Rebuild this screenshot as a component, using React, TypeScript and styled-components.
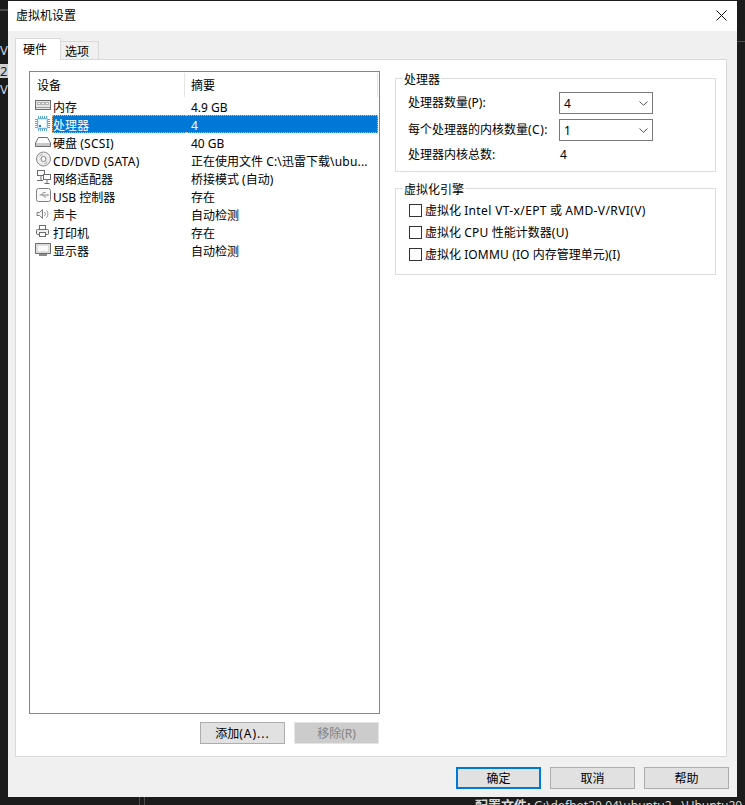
import React from "react";
import styled, { createGlobalStyle } from "styled-components";

const Global = createGlobalStyle`
  html, body { margin: 0; padding: 0; background: #1b1b1b; }
  * { box-sizing: border-box; }
`;

const FONT = `"Noto Sans", "Noto Sans CJK SC", "Liberation Sans", sans-serif`;

const Desktop = styled.div`
  position: relative;
  width: 745px;
  height: 805px;
  overflow: hidden;
  background: #1b1b1b;
  padding: 1px 8px 0 8px;
  font-family: ${FONT};
  font-size: 12px;
  color: #000;
`;

const BackText = styled.div<{ $x: number; $y: number; $invert?: boolean }>`
  position: absolute;
  left: ${(p) => p.$x}px;
  top: ${(p) => p.$y}px;
  width: ${(p) => (p.$invert ? "8px" : "auto")};
  height: ${(p) => (p.$invert ? "14px" : "auto")};
  color: ${(p) => (p.$invert ? "#222" : "#c8d4e0")};
  background: ${(p) => (p.$invert ? "#d0d0d0" : "transparent")};
  font-size: 13px;
  line-height: 14px;
  white-space: nowrap;
`;

const StatusText = styled.div`
  position: absolute;
  left: 475px;
  top: 797px;
  color: #d8d8d8;
  font-size: 13px;
  font-weight: 700;
  line-height: 16px;
  white-space: nowrap;
`;

const StatusPath = styled.span`
  font-size: 12px;
  font-weight: 400;
`;

const BackRule = styled.div<{ $x: number; $y: number; $w: number; $h: number }>`
  position: absolute;
  left: ${(p) => p.$x}px;
  top: ${(p) => p.$y}px;
  width: ${(p) => p.$w}px;
  height: ${(p) => p.$h}px;
  background: #4a4a4a;
`;

const Win = styled.div`
  position: relative;
  width: 729px;
  height: 796px;
  background: #f0f0f0;
  display: flex;
  flex-direction: column;
`;

const TitleBar = styled.div`
  height: 30px;
  background: #fff;
  display: flex;
  align-items: center;
  justify-content: space-between;
  padding: 0 10px 2px 8px;
  font-size: 12px;
`;

const Body = styled.div`
  flex: 1;
  display: flex;
  flex-direction: column;
  padding: 7px 10px 0 7px;
`;

const TabStrip = styled.div`
  display: flex;
  align-items: flex-end;
  height: 21px;
`;

const ActiveTab = styled.div`
  width: 46px;
  height: 22px;
  margin-bottom: -1px;
  padding: 0 0 2px 7px;
  background: #fff;
  border: 1px solid #d9d9d9;
  border-bottom: none;
  display: flex;
  align-items: center;
  position: relative;
  z-index: 1;
`;

const IdleTab = styled.div`
  width: 38px;
  height: 18px;
  padding: 1px 0 0 4px;
  background: #f0f0f0;
  border: 1px solid #d9d9d9;
  border-left: none;
  border-bottom: none;
  display: flex;
  align-items: center;
`;

const Panel = styled.div`
  width: 712px;
  height: 698px;
  background: #fff;
  border: 1px solid #d9d9d9;
  display: flex;
  padding: 11px 10px 0 13px;
  gap: 15px;
`;

const LeftCol = styled.div`
  width: 351px;
  display: flex;
  flex-direction: column;
`;

const ListBox = styled.div`
  height: 643px;
  border: 1px solid #82878f;
  padding: 1px 0 0 1px;
`;

const HeadRow = styled.div`
  height: 24px;
  display: grid;
  grid-template-columns: 154px 1fr;
`;

const HeadCell = styled.div`
  display: flex;
  align-items: center;
  padding-left: 6px;
  border-right: 1px solid #e5e5e5;
  &:last-child { margin-right: 1px; }
`;

const Row = styled.div`
  height: 18px;
  display: grid;
  grid-template-columns: 155px 1fr;
`;

const DevCell = styled.div`
  display: flex;
  height: 18px;
  padding-left: 4px;
`;

const IconBox = styled.span`
  width: 17px;
  height: 18px;
  flex: none;
  display: block;
  svg { display: block; }
`;

const DevName = styled.span<{ $sel?: boolean }>`
  height: 18px;
  line-height: 19px;
  flex: 1;
  white-space: nowrap;
  border: 1px dotted ${(p) => (p.$sel ? "#f2b27a" : "transparent")};
  border-right: none;
  background: ${(p) => (p.$sel ? "#0078d7" : "transparent")};
  color: ${(p) => (p.$sel ? "#fff" : "#000")};
`;

const SumCell = styled.span<{ $sel?: boolean }>`
  height: 18px;
  line-height: 19px;
  padding-left: 5px;
  margin-right: 1px;
  white-space: nowrap;
  overflow: hidden;
  border: 1px dotted ${(p) => (p.$sel ? "#f2b27a" : "transparent")};
  border-left: none;
  background: ${(p) => (p.$sel ? "#0078d7" : "transparent")};
  color: ${(p) => (p.$sel ? "#fff" : "#000")};
`;

const Lat = styled.span<{ $s?: number }>`
  letter-spacing: ${(p) => p.$s ?? 0.3}px;
`;

const ListActions = styled.div`
  display: flex;
  justify-content: flex-end;
  gap: 9px;
  margin-top: 8px;
  padding-right: 1px;
`;

const Btn = styled.div<{ $disabled?: boolean; $primary?: boolean }>`
  width: 85px;
  height: 22px;
  display: flex;
  align-items: center;
  justify-content: center;
  font-size: 12px;
  background: ${(p) => (p.$disabled ? "#cccccc" : "#e1e1e1")};
  color: ${(p) => (p.$disabled ? "#838383" : "#000")};
  border: ${(p) => (p.$primary ? "2px solid #0078d7" : p.$disabled ? "1px solid #e4e4e4" : "1px solid #adadad")};
`;

const RightCol = styled.div`
  width: 321px;
  display: flex;
  flex-direction: column;
  padding-top: 7px;
  gap: 16px;
`;

const Group = styled.div<{ $h: number }>`
  position: relative;
  height: ${(p) => p.$h}px;
  border: 1px solid #dcdcdc;
`;

const Legend = styled.span`
  position: absolute;
  left: 7px;
  top: -7px;
  padding: 0 1px;
  height: 16px;
  line-height: 16px;
  background: #fff;
`;

const ProcGrid = styled.div`
  display: grid;
  grid-template-columns: 151px 94px;
  grid-template-rows: 27px 25px 24px;
  padding: 13px 0 0 12px;
  align-items: start;
`;

const ProcLabel = styled.span`
  line-height: 21px;
`;

const SelectBox = styled.div`
  width: 94px;
  height: 22px;
  border: 1px solid #7a7a7a;
  background: #fff;
  display: flex;
  align-items: center;
  justify-content: space-between;
  padding: 0 4px 0 4px;
`;

const ValueText = styled.span`
  line-height: 21px;
  padding-left: 1px;
`;

const CheckList = styled.div`
  display: flex;
  flex-direction: column;
  padding: 10px 0 0 13px;
`;

const CheckRow = styled.div`
  display: flex;
  align-items: center;
  height: 22px;
  gap: 3px;
`;

const CheckMark = styled.span`
  width: 13px;
  height: 13px;
  border: 1px solid #333;
  background: #fff;
  flex: none;
`;

const Footer = styled.div`
  display: flex;
  justify-content: flex-end;
  gap: 9px;
  padding: 10px 0 0 0;
  margin-right: -2px;
`;

const S = "#6d6d6d";

const Mem = () => (
  <svg width="17" height="18" viewBox="0 0 17 18" fill="none">
    <rect x="0.5" y="3.5" width="15" height="9" fill="#e4e4e4" stroke={S} />
    <rect x="2" y="5" width="12" height="3" fill="#b5b5b5" />
    <path d="M3 6.5h2M7 6.5h2M11 6.5h2" stroke="#f4f4f4" />
    <path d="M1 10.5h14" stroke="#a0a0a0" />
  </svg>
);
const Cpu = () => (
  <svg width="17" height="18" viewBox="0 0 17 18" fill="none">
    <path d="M3.500 1v15M5.500 1v15M7.500 1v15M9.500 1v15M11.500 1v15M0 4.500h15M0 6.500h15M0 8.500h15M0 10.500h15M0 12.500h15" stroke="#5aa8da" />
    <rect x="2.500" y="3.500" width="10" height="10" rx="1" fill="#d5eafa" stroke="#6fb3e0" />
    <rect x="4" y="5" width="7" height="7" fill="#fff" />
    <rect x="4" y="10" width="2" height="2" fill="#2f78ad" />
  </svg>
);
const Disk = () => (
  <svg width="17" height="18" viewBox="0 0 17 18" fill="none">
    <path d="M3.500 4.500h9l3 5.500v3.500h-15v-3.500z" fill="#fff" stroke={S} />
    <rect x="1" y="10" width="14" height="3" fill="#c9c9c9" />
  </svg>
);
const Cd = () => (
  <svg width="17" height="18" viewBox="0 0 17 18" fill="none">
    <circle cx="8.500" cy="8" r="7" fill="#ececec" stroke="#8a8a8a" />
    <circle cx="8.500" cy="8" r="2.500" fill="#fff" stroke="#808080" />
    <path d="M4.500 5a5 5 0 0 1 3-1.500M12.500 11a5 5 0 0 1-3 1.500" stroke="#a8a8a8" />
  </svg>
);
const Net = () => (
  <svg width="17" height="18" viewBox="0 0 17 18" fill="none">
    <rect x="2.500" y="1.500" width="7" height="5" fill="#fff" stroke={S} />
    <rect x="8.500" y="5.500" width="7" height="5" fill="#fff" stroke={S} />
    <path d="M6 7v4M2 11.500h6M12 11v3M9.500 14.500h5" stroke={S} />
  </svg>
);
const Usb = () => (
  <svg width="17" height="18" viewBox="0 0 17 18" fill="none">
    <rect x="1.500" y="1.500" width="14" height="13" rx="2" fill="#fafafa" stroke="#808080" />
    <path d="M4.500 8h8M6.500 8l2-2.500h2M7.500 8l2 2h1.500" stroke="#8a8a8a" />
    <path d="M12.500 6.500v3l1.500-1.500z" fill="#8a8a8a" />
  </svg>
);
const Sound = () => (
  <svg width="17" height="18" viewBox="0 0 17 18" fill="none">
    <path d="M2 7.500h2.500l3-3v9l-3-3h-2.500z" fill="#f4f4f4" stroke="#808080" />
    <path d="M9.500 7a3 3 0 0 1 0 4M11.500 5.500a5 5 0 0 1 0 7" stroke="#9a9a9a" />
  </svg>
);
const Printer = () => (
  <svg width="17" height="18" viewBox="0 0 17 18" fill="none">
    <rect x="4.500" y="2.500" width="6" height="4" fill="#fff" stroke={S} />
    <rect x="1.500" y="6.500" width="12" height="5" rx="1" fill="#f0f0f0" stroke={S} />
    <rect x="4.500" y="9.500" width="6" height="4" fill="#fff" stroke={S} />
  </svg>
);
const Monitor = () => (
  <svg width="17" height="18" viewBox="0 0 17 18" fill="none">
    <rect x="0.500" y="2.500" width="15" height="10" fill="#f4f4f4" stroke={S} />
    <rect x="2" y="4" width="12" height="7" fill="#fafafa" stroke="#c4c4c4" />
    <path d="M4 14h8" stroke="#8c8c8c" strokeWidth="2" />
  </svg>
);

const Chevron = () => (
  <svg width="9" height="5" viewBox="0 0 9 5" fill="none">
    <path d="M0.500 0.500L4.500 4.300L8.500 0.500" stroke="#555" />
  </svg>
);

const Close = () => (
  <svg width="11" height="11" viewBox="0 0 11 11" fill="none">
    <path d="M0.500 0.500L10.500 10.500M10.500 0.500L0.500 10.500" stroke="#111" />
  </svg>
);

const devices = [
  { key: "mem", icon: <Mem />, name: <>内存</>, sum: <>4.9 GB</> },
  { key: "cpu", icon: <Cpu />, name: <>处理器</>, sum: <>4</>, sel: true },
  { key: "disk", icon: <Disk />, name: <>硬盘 <Lat>(SCSI)</Lat></>, sum: <>40 GB</> },
  {
    key: "cd",
    icon: <Cd />,
    name: <Lat>CD/DVD (SATA)</Lat>,
    sum: <>正在使用文件 <Lat $s={0.2}>C:\</Lat>迅雷下载<Lat $s={0.2}>\ubu...</Lat></>,
  },
  { key: "net", icon: <Net />, name: <>网络适配器</>, sum: <>桥接模式 (自动)</> },
  { key: "usb", icon: <Usb />, name: <>USB 控制器</>, sum: <>存在</> },
  { key: "snd", icon: <Sound />, name: <>声卡</>, sum: <>自动检测</> },
  { key: "prn", icon: <Printer />, name: <>打印机</>, sum: <>存在</> },
  { key: "mon", icon: <Monitor />, name: <>显示器</>, sum: <>自动检测</> },
];

const checks = [
  { key: "v", text: <>虚拟化 <Lat $s={0.38}>Intel VT-x/EPT</Lat> 或 <Lat $s={0.38}>AMD-V/RVI(V)</Lat></> },
  { key: "u", text: <>虚拟化 <Lat>CPU</Lat> 性能计数器<Lat>(U)</Lat></> },
  { key: "i", text: <>虚拟化 <Lat $s={0.15}>IOMMU (IO</Lat> 内存管理单元<Lat $s={0.15}>)(I)</Lat></> },
];

export default function App() {
  return (
    <Desktop>
      <Global />
      <BackText $x={0} $y={43}>V</BackText>
      <BackText $x={0} $y={64} $invert>2</BackText>
      <BackText $x={0} $y={82}>V</BackText>
      <BackRule $x={0} $y={9} $w={8} $h={2} />
      <BackRule $x={737} $y={41} $w={8} $h={1} />
      <BackRule $x={139} $y={797} $w={1} $h={8} />
      <BackRule $x={144} $y={797} $w={1} $h={8} />
      <StatusText>
        配置文件: <StatusPath>G:\dofbot20.04\ubuntu2...\Ubuntu20</StatusPath>
      </StatusText>
      <Win>
        <TitleBar>
          <span>虚拟机设置</span>
          <Close />
        </TitleBar>
        <Body>
          <TabStrip>
            <ActiveTab>硬件</ActiveTab>
            <IdleTab>选项</IdleTab>
          </TabStrip>
          <Panel>
            <LeftCol>
              <ListBox>
                <HeadRow>
                  <HeadCell>设备</HeadCell>
                  <HeadCell>摘要</HeadCell>
                </HeadRow>
                {devices.map((d) => (
                  <Row key={d.key}>
                    <DevCell>
                      <IconBox>{d.icon}</IconBox>
                      <DevName $sel={d.sel}>{d.name}</DevName>
                    </DevCell>
                    <SumCell $sel={d.sel}>{d.sum}</SumCell>
                  </Row>
                ))}
              </ListBox>
              <ListActions>
                <Btn>添加<Lat $s={1}>(A)...</Lat></Btn>
                <Btn $disabled>移除(R)</Btn>
              </ListActions>
            </LeftCol>
            <RightCol>
              <Group $h={94}>
                <Legend>处理器</Legend>
                <ProcGrid>
                  <ProcLabel>处理器数量(P):</ProcLabel>
                  <SelectBox>
                    <span>4</span>
                    <Chevron />
                  </SelectBox>
                  <ProcLabel>每个处理器的内核数量<Lat $s={0.5}>(C):</Lat></ProcLabel>
                  <SelectBox>
                    <span>1</span>
                    <Chevron />
                  </SelectBox>
                  <ProcLabel>处理器内核总数:</ProcLabel>
                  <ValueText>4</ValueText>
                </ProcGrid>
              </Group>
              <Group $h={87}>
                <Legend>虚拟化引擎</Legend>
                <CheckList>
                  {checks.map((c) => (
                    <CheckRow key={c.key}>
                      <CheckMark />
                      <span>{c.text}</span>
                    </CheckRow>
                  ))}
                </CheckList>
              </Group>
            </RightCol>
          </Panel>
          <Footer>
            <Btn $primary>确定</Btn>
            <Btn>取消</Btn>
            <Btn>帮助</Btn>
          </Footer>
        </Body>
      </Win>
    </Desktop>
  );
}
